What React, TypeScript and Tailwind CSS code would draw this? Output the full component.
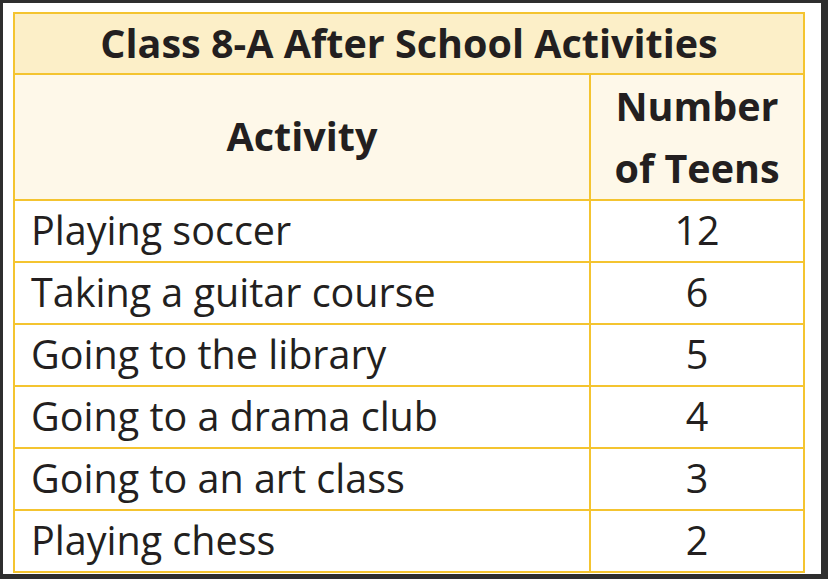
const rows: [string, number][] = [
  ['Playing soccer', 12],
  ['Taking a guitar course', 6],
  ['Going to the library', 5],
  ['Going to a drama club', 4],
  ['Going to an art class', 3],
  ['Playing chess', 2],
];

export default function App() {
  return (
    <div className="w-[828px] h-[579px] bg-[#2e2e2e] pt-[3px] pl-[3px] pr-[7px] pb-[5px]">
      <div
        className="h-full bg-white pl-[10px] pt-[9px] text-[#231f20]"
        style={{ fontFamily: '"Open Sans", "Liberation Sans", sans-serif' }}
      >
        <table className="border-collapse w-[790px] table-fixed">
          <colgroup>
            <col className="w-[576px]" />
            <col className="w-[214px]" />
          </colgroup>
          <thead>
            <tr className="h-[61px] bg-[#fcefc8]">
              <th
                colSpan={2}
                className="border-2 border-[#f4c430] text-[39.5px] font-bold text-center leading-none"
              >
                Class 8-A After School Activities
              </th>
            </tr>
            <tr className="h-[126px] bg-[#fef8e9]">
              <th className="border-2 border-[#f4c430] text-[39.5px] font-bold text-center leading-none">
                Activity
              </th>
              <th className="border-2 border-[#f4c430] text-[39.5px] font-bold text-center leading-[62px]">
                Number
                <br />
                of Teens
              </th>
            </tr>
          </thead>
          <tbody>
            {rows.map(([name, n]) => (
              <tr key={name} className="h-[62px]">
                <td className="border-2 border-[#f4c430] pl-[16px] text-[39.5px] leading-none">
                  {name}
                </td>
                <td className="border-2 border-[#f4c430] text-center text-[39.5px] leading-none">
                  {n}
                </td>
              </tr>
            ))}
          </tbody>
        </table>
      </div>
    </div>
  );
}
